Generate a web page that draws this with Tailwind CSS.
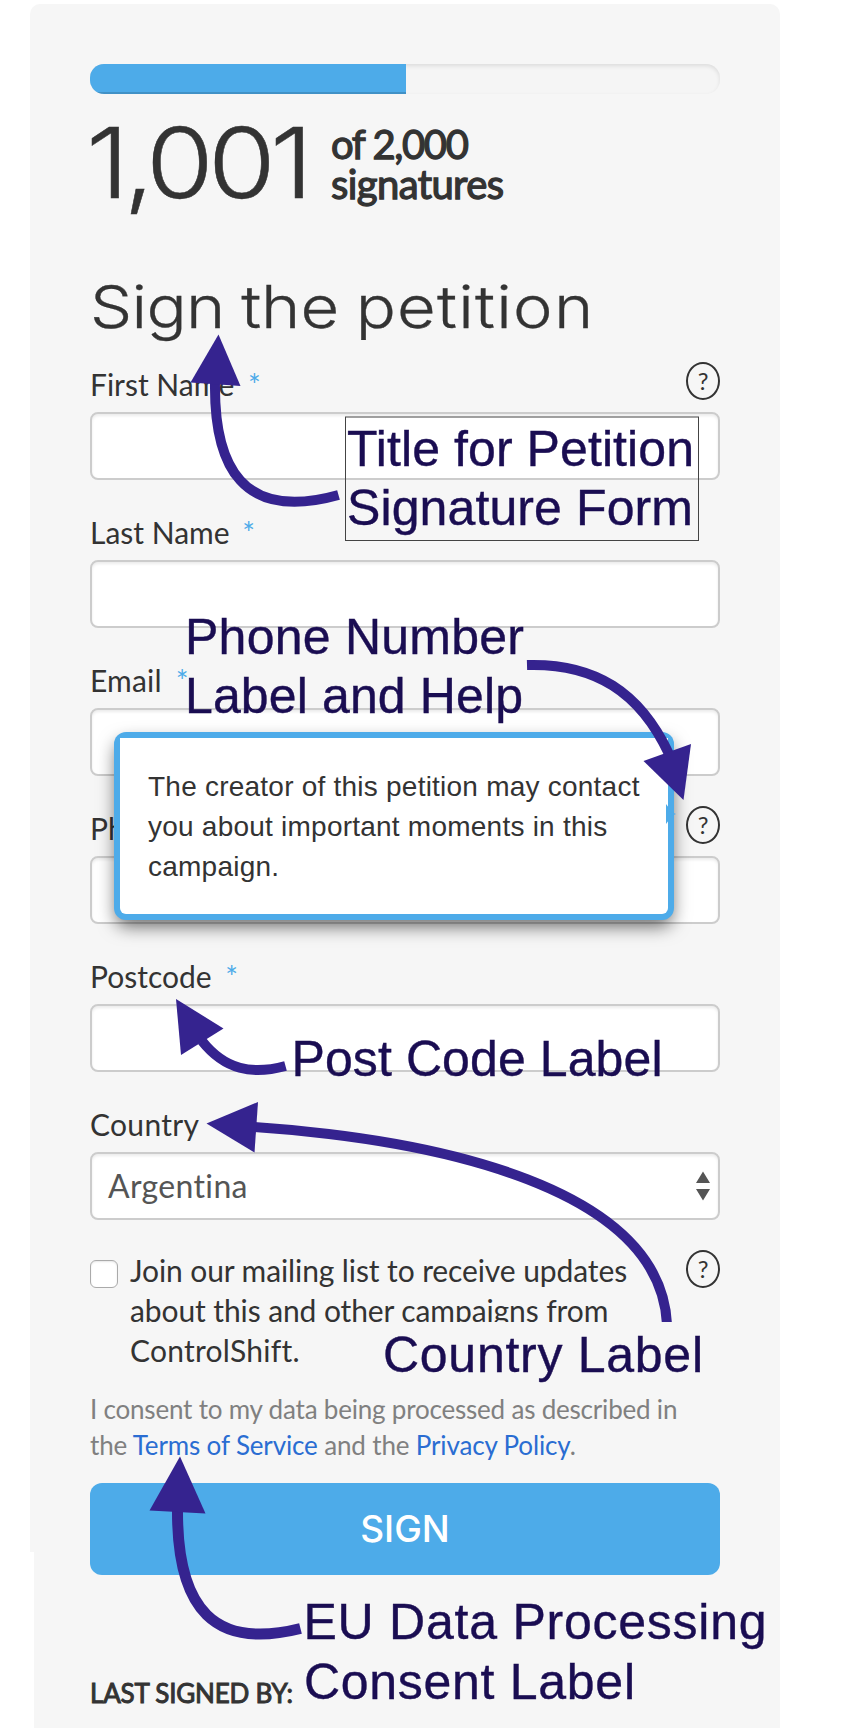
<!DOCTYPE html>
<html lang="en">
<head>
    <meta charset="UTF-8">
    <title>Sign the petition</title>
    <script src="https://cdn.jsdelivr.net/npm/@tailwindcss/browser@4"></script>
</head>
<body class="bg-white relative w-[842px] h-[1728px] overflow-hidden pt-1 pl-[30px] font-['Lato',sans-serif] text-[#333] [font-variant-ligatures:none]">

    <main class="relative w-[750px] h-[1724px] bg-[#f6f6f6] rounded-t-[10px] px-[60px] pt-[60px]">

        <!-- Progress bar -->
        <div class="h-[30px] rounded-[14px] overflow-hidden bg-[#f5f5f5] shadow-[inset_0_2px_4px_rgba(0,0,0,0.1)]">
            <div class="h-full bg-[#4dabe9] shadow-[inset_0_-2px_0_rgba(0,0,0,0.15)]" style="width: 50.15%"></div>
        </div>

        <!-- Signature count -->
        <div class="flex h-[150px]">
            <div class="w-[241px] pt-[14px] -ml-[4px] mr-[4px] whitespace-nowrap font-['Inter',sans-serif] font-light text-[97px] leading-[110px] tracking-[-5px] origin-left scale-x-[1.13] [-webkit-text-stroke:0.5px_#333]">1,001</div>
            <div class="pt-[30px] text-[40px] leading-10 tracking-[-0.6px] [-webkit-text-stroke:1.3px_#333]"><span class="tracking-[-1.4px]">of 2,000</span><br>signatures</div>
        </div>

        <h1 class="h-[120px] pt-[23px] font-['Inter',sans-serif] font-light text-[59px] leading-[80px] whitespace-nowrap origin-left scale-x-[1.132] [word-spacing:-2px] [-webkit-text-stroke:0.3px_#333]"><span class="tracking-[-0.6px]">Sign</span> the <span class="tracking-[1.1px]">petition</span></h1>

        <!-- Form fields -->
        <form class="text-[30px] leading-10">
            <div class="h-[148px]">
                <div class="flex justify-between h-12">
                    <label>First Name <span class="ml-1.5 text-[#4dabe9]">*</span></label>
                    <span class="w-[34px] h-[38px] -mt-0.5 rounded-[50%] border-2 border-[#333] flex items-center justify-center text-2xl">?</span>
                </div>
                <div class="h-[68px] rounded-lg border-2 border-[#ccc] bg-white shadow-[inset_0_2px_3px_rgba(0,0,0,0.08)]"></div>
            </div>
            <div class="h-[148px]">
                <div class="h-12"><label>Last Name <span class="ml-[5px] text-[#4dabe9]">*</span></label></div>
                <div class="h-[68px] rounded-lg border-2 border-[#ccc] bg-white shadow-[inset_0_2px_3px_rgba(0,0,0,0.08)]"></div>
            </div>
            <div class="h-[148px]">
                <div class="h-12"><label class="tracking-[0.2px]">Email <span class="ml-1.5 text-[#4dabe9]">*</span></label></div>
                <div class="h-[68px] rounded-lg border-2 border-[#ccc] bg-white shadow-[inset_0_2px_3px_rgba(0,0,0,0.08)]"></div>
            </div>
            <div class="relative h-[148px]">
                <div class="flex justify-between h-12">
                    <label>Phone</label>
                    <span class="w-[34px] h-[38px] -mt-0.5 rounded-[50%] border-2 border-[#333] flex items-center justify-center text-2xl">?</span>
                </div>
                <div class="h-[68px] rounded-lg border-2 border-[#ccc] bg-white shadow-[inset_0_2px_3px_rgba(0,0,0,0.08)]"></div>
                <!-- Help tooltip -->
                <div class="absolute left-6 -top-[76px] w-[560px] h-[188px] rounded-xl bg-[#4dabe9] p-1.5 shadow-[0_8px_18px_-2px_rgba(0,0,0,0.6)]">
                    <div class="h-full rounded-b-md bg-white pl-[28px] pt-[29px] font-['Liberation_Sans',sans-serif] text-[28px] leading-10 tracking-[0.23px] whitespace-nowrap">The creator of this petition may contact<br>you about important moments in this<br>campaign.</div>
                </div>
            </div>
            <div class="h-[148px]">
                <div class="h-12"><label>Postcode <span class="ml-1.5 text-[#4dabe9]">*</span></label></div>
                <div class="h-[68px] rounded-lg border-2 border-[#ccc] bg-white shadow-[inset_0_2px_3px_rgba(0,0,0,0.08)]"></div>
            </div>
            <div class="h-[148px]">
                <div class="h-12"><label class="tracking-[0.3px]">Country</label></div>
                <div class="flex items-center justify-between h-[68px] pl-4 pr-[8px] rounded-lg border-2 border-[#ccc] bg-white shadow-[inset_0_2px_3px_rgba(0,0,0,0.08)] text-[32px] text-[#555]">
                    <span class="tracking-[0.35px]">Argentina</span>
                    <svg class="w-[14px] h-[30px]" viewBox="0 0 14 30" fill="#555"><path d="M0 12 7 .5 14 12zM0 18h14L7 29.5z"/></svg>
                </div>
            </div>

            <div class="flex h-[136px]">
                <span class="mt-2 w-7 h-7 rounded-md border border-[#aaa] bg-white shadow-[inset_0_1px_2px_rgba(0,0,0,0.1)]"></span>
                <p class="ml-3 w-[540px] -mt-0.5 tracking-[-0.1px] whitespace-nowrap">Join our mailing list to receive updates<br>about this and other campaigns from<br><span class="tracking-[0.25px]">ControlShift.</span></p>
                <span class="ml-auto w-[34px] h-[38px] -mt-0.5 rounded-[50%] border-2 border-[#333] flex items-center justify-center text-2xl">?</span>
            </div>

            <p class="h-[95px] pt-[3px] text-[26px] leading-9 tracking-[-0.2px] text-[#808080] whitespace-nowrap">I consent to my data being processed as described in<br><span class="tracking-[-0.15px]">the <a class="text-[#2a6dd2]">Terms of Service</a> and the <a class="text-[#2a6dd2]">Privacy Policy</a>.</span></p>

            <button type="button" class="block w-full h-[92px] rounded-xl bg-[#4dabe9] text-white font-['Inter',sans-serif] font-medium text-[37px]">SIGN</button>
        </form>

        <p class="mt-[100px] text-[26px] leading-9 tracking-[-0.2px] [-webkit-text-stroke:1px_#333]">LAST SIGNED BY:</p>
    </main>

    <!-- Annotations on top of the form -->
    <svg class="absolute left-0 top-0 w-[842px] h-[1728px]" viewBox="0 0 842 1728" fill="none">
        <rect x="30" y="1552" width="4" height="176" fill="#fff"/>
        <path d="M666 804l3 4v3l7 3-7 3v3l-3 4z" fill="#4dabe9"/>
        <g stroke="#35238f" stroke-width="10">
            <path d="M215 383C214 466 242 522 338.5 495"/>
            <path d="M527 665C595 663 640 692 669 754"/>
            <path d="M202 1041C225 1070 252 1075 285.5 1066"/>
            <path d="M254 1127C440 1140 660 1188 667 1324"/>
            <path d="M177.5 1510C177 1610 215 1650 300.5 1628.5" stroke-width="11"/>
        </g>
        <g fill="#35238f">
            <path d="M218.5 334.5 190.5 382.5 240.5 386z"/>
            <path d="M683.5 800 643.5 761 691 744z"/>
            <path d="M206.5 1123.5 258 1102 254.5 1152.5z"/>
            <path d="M176 999 223.5 1028.5 181 1055z"/>
            <path d="M180 1456.5 149.5 1510.5 205.5 1513.5z"/>
        </g>
        <rect x="380" y="1322" width="330" height="63" fill="#f6f6f6"/>
        <rect x="345.5" y="417" width="353" height="123.5" stroke="#444"/>
        <g class="font-['Liberation_Sans',sans-serif] text-[50px]" fill="#1a0d52" stroke="#1a0d52" stroke-width=".4">
            <text x="347" y="466" textLength="347">Title for Petition</text>
            <text x="347" y="524.5" textLength="346">Signature Form</text>
            <text x="185" y="653.5" textLength="339">Phone Number</text>
            <text x="185" y="712.5" textLength="338">Label and Help</text>
            <text x="291.5" y="1075.5" textLength="371">Post Code Label</text>
            <text x="383" y="1372" textLength="320">Country Label</text>
            <text x="303.5" y="1639" textLength="463">EU Data Processing</text>
            <text x="304" y="1699" textLength="331">Consent Label</text>
        </g>
    </svg>
</body>
</html>
